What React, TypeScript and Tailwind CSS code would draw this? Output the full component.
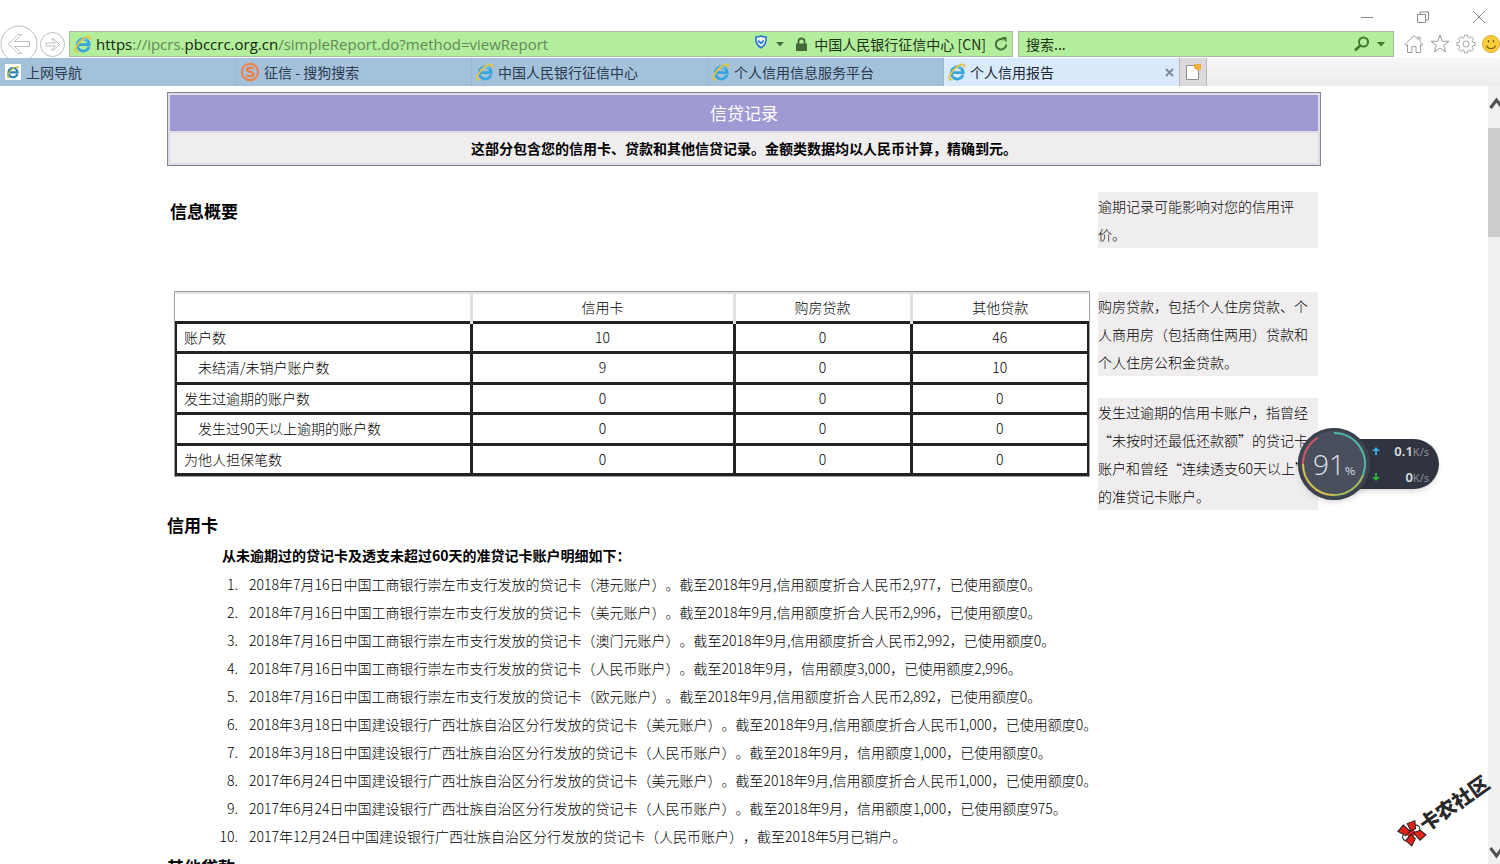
import type React from "react";

const creditCards = [
  "2018年7月16日中国工商银行崇左市支行发放的贷记卡（港元账户）。截至2018年9月,信用额度折合人民币2,977，已使用额度0。",
  "2018年7月16日中国工商银行崇左市支行发放的贷记卡（美元账户）。截至2018年9月,信用额度折合人民币2,996，已使用额度0。",
  "2018年7月16日中国工商银行崇左市支行发放的贷记卡（澳门元账户）。截至2018年9月,信用额度折合人民币2,992，已使用额度0。",
  "2018年7月16日中国工商银行崇左市支行发放的贷记卡（人民币账户）。截至2018年9月，信用额度3,000，已使用额度2,996。",
  "2018年7月16日中国工商银行崇左市支行发放的贷记卡（欧元账户）。截至2018年9月,信用额度折合人民币2,892，已使用额度0。",
  "2018年3月18日中国建设银行广西壮族自治区分行发放的贷记卡（美元账户）。截至2018年9月,信用额度折合人民币1,000，已使用额度0。",
  "2018年3月18日中国建设银行广西壮族自治区分行发放的贷记卡（人民币账户）。截至2018年9月，信用额度1,000，已使用额度0。",
  "2017年6月24日中国建设银行广西壮族自治区分行发放的贷记卡（美元账户）。截至2018年9月,信用额度折合人民币1,000，已使用额度0。",
  "2017年6月24日中国建设银行广西壮族自治区分行发放的贷记卡（人民币账户）。截至2018年9月，信用额度1,000，已使用额度975。",
  "2017年12月24日中国建设银行广西壮族自治区分行发放的贷记卡（人民币账户），截至2018年5月已销户。",
];

interface SummaryRow {
  label: string;
  indent?: boolean;
  values: number[];
}

const summary: SummaryRow[] = [
  { label: "账户数", values: [10, 0, 46] },
  { label: "未结清/未销户账户数", indent: true, values: [9, 0, 10] },
  { label: "发生过逾期的账户数", values: [0, 0, 0] },
  { label: "发生过90天以上逾期的账户数", indent: true, values: [0, 0, 0] },
  { label: "为他人担保笔数", values: [0, 0, 0] },
];

function IeIcon() {
  return (
    <svg width="18" height="18" viewBox="0 0 18 18" fill="none" className="shrink-0">
      <path
        d="M15 11.6A6 6 0 1 1 15.2 9.6H4.6"
        stroke="#3aa5dc"
        strokeWidth="2.8"
      />
      <path d="M4.2 8.2a6 6 0 0 1 9-3" stroke="#8bd4f3" strokeWidth="1" />
      <path
        d="M16.2 4.6C17 2.2 15.6.8 13 1.6 9 2.8 3.2 8.4 1.6 13c-1 2.8.2 4.4 2.8 3.4"
        stroke="#e2c443"
        strokeWidth="1.8"
      />
    </svg>
  );
}

function NavIcon() {
  return (
    <svg width="18" height="18" viewBox="0 0 18 18" fill="none" className="shrink-0">
      <path d="M1 1h16v16H1z" fill="#fff" />
      <path d="M13.4 11A4.6 4.6 0 1 1 13.6 9.4H6" stroke="#2b80b4" strokeWidth="2.2" />
      <path d="M14.4 5.4C15 2 9 4.600 6 8.200c-3 3.400-3.400 7.400 0 5.800" stroke="#b8bd36" strokeWidth="1.300" />
    </svg>
  );
}

function SogouIcon() {
  return (
    <svg width="20" height="20" viewBox="0 0 20 20" fill="none" className="shrink-0">
      <circle cx="10" cy="10" r="8.2" stroke="#ef7f45" strokeWidth="2" />
      <path
        d="M13.600 6.600C12 5.400 7 5.200 7 7.800c0 2.600 6.400 1.600 6.400 4.300 0 2.700-5.200 2.300-7 1"
        stroke="#ef7f45"
        strokeWidth="2.400"
      />
    </svg>
  );
}

interface TabProps {
  icon: React.ReactNode;
  title: string;
}

function Tab({ icon, title }: TabProps) {
  return (
    <button
      type="button"
      className="flex w-[236px] min-w-0 items-center gap-1 border-r border-[#9ab6d3] bg-[#a4c1dc] pl-1 text-left text-[#2b3a4c]"
    >
      {icon}
      <span className="truncate">{title}</span>
    </button>
  );
}

function TitleBar() {
  return (
    <div className="flex h-[30px] items-center justify-end gap-[42px] pr-[14px] pt-1 text-[#8a8a8a]">
      <button type="button" aria-label="最小化">
        <svg width="14" height="14" viewBox="0 0 14 14" stroke="currentColor">
          <path d="M1 7.500h12" />
        </svg>
      </button>
      <button type="button" aria-label="还原">
        <svg width="14" height="14" viewBox="0 0 14 14" fill="none" stroke="currentColor">
          <path d="M1.500 4.500h8v8h-8zM4 4.500v-2.500h8.500v8H9.500" />
        </svg>
      </button>
      <button type="button" aria-label="关闭">
        <svg width="14" height="14" viewBox="0 0 14 14" stroke="currentColor">
          <path d="M1 1l12 12M13 1L1 13" />
        </svg>
      </button>
    </div>
  );
}

function AddressBar() {
  return (
    <div className="flex h-7 items-center">
      <div className="flex w-[69px] shrink-0 items-center gap-[2px]">
        <button type="button" aria-label="后退" className="-my-2">
          <svg width="38" height="38" viewBox="0 0 38 38" fill="none" stroke="#bdbdbd">
            <circle cx="19" cy="19" r="18" />
            <path d="M8.500 19l9.500-9.500h3.500L14.500 16.500h15v5h-15l7 7H18z" strokeLinejoin="round" />
          </svg>
        </button>
        <button type="button" aria-label="前进">
          <svg width="25" height="25" viewBox="0 0 25 25" fill="none" stroke="#bdbdbd">
            <circle cx="12.500" cy="12.500" r="12" />
            <path d="M19.500 12.500l-5.500-5.500h-2.500l4 4h-9.500v3h9.500l-4 4H14z" strokeLinejoin="round" />
          </svg>
        </button>
      </div>
      <div className="mr-[5px] flex h-[26px] min-w-0 flex-1 items-center border border-[#a9b8a3] bg-[#b3ee9c] px-1">
        <IeIcon />
        <div
          role="textbox"
          aria-label="地址"
          className="ml-1 min-w-0 flex-1 truncate font-['Open_Sans','Noto_Sans_CJK_SC',sans-serif] text-[15px] leading-5 text-[#64885a]"
        >
          <span className="text-[#14240f]">https</span>://ipcrs.
          <span className="text-[#14240f]">pbccrc.org.cn</span>
          /simpleReport.do?method=viewReport
        </div>
        <svg width="14" height="14" viewBox="0 0 14 14" fill="none" className="mb-1 shrink-0">
          <path
            d="M7 1c2 .8 3.600 1 5.200 1 .3 5-1 8.500-5.200 10.800C2.800 10.500 1.500 7 1.800 2 3.400 2 5 1.800 7 1z"
            fill="#e9f4ff"
            stroke="#2f74d8"
            strokeWidth="1.600"
          />
          <path d="M4.200 5.600L7 8.400l2.800-2.800" stroke="#2f74d8" strokeWidth="1.600" />
        </svg>
        <svg width="8" height="5" viewBox="0 0 8 5" className="ml-2 shrink-0">
          <path d="M0 0h8L4 4.500z" fill="#46713a" />
        </svg>
        <svg width="13" height="15" viewBox="0 0 13 15" fill="none" className="ml-[11px] shrink-0">
          <path d="M3.500 7V4.500a3 3 0 0 1 6 0V7" stroke="#46663c" strokeWidth="1.800" />
          <path d="M1 6.500h11V14H1z" fill="#46663c" />
        </svg>
        <span className="ml-[6px] shrink-0 text-[14px] text-[#1d3316]">中国人民银行征信中心 [CN]</span>
        <button type="button" aria-label="刷新" className="ml-2 shrink-0">
          <svg width="14" height="14" viewBox="0 0 14 14" fill="none">
            <path d="M12.200 7.500A5.200 5.200 0 1 1 9 2.500" stroke="#46713a" strokeWidth="2" />
            <path d="M7.500 0h5v5.500z" fill="#46713a" />
          </svg>
        </button>
      </div>
      <div className="flex h-[26px] w-[376px] shrink-0 items-center border border-[#a9b8a3] bg-[#b3ee9c] pl-[7px] pr-2">
        <input
          type="text"
          aria-label="搜索"
          placeholder="搜索..."
          className="min-w-0 flex-1 bg-transparent text-[14px] outline-none placeholder:text-[#1d3316]"
        />
        <button type="button" aria-label="开始搜索" className="flex items-center gap-[7px]">
          <svg width="16" height="16" viewBox="0 0 16 16" fill="none" stroke="#3d7a2c">
            <circle cx="9.500" cy="6" r="4.500" strokeWidth="2" />
            <path d="M6.200 9.500L1 14.500" strokeWidth="2.600" />
          </svg>
          <svg width="8" height="5" viewBox="0 0 8 5">
            <path d="M0 0h8L4 4.500z" fill="#3d7a2c" />
          </svg>
        </button>
      </div>
      <div className="flex w-[106px] shrink-0 items-center justify-end gap-[6px]">
        <button type="button" aria-label="主页">
          <svg width="20" height="20" viewBox="0 0 20 20" fill="none" stroke="#9c9c9c">
            <path
              d="M1 10.500L10 1.500l4 4V3h2v4.500l3 3-1.200 1.200-1.300-1.200V18.500h-4.500v-6H8v6H3.500V10.500L2.200 11.700z"
              strokeLinejoin="round"
            />
          </svg>
        </button>
        <button type="button" aria-label="收藏夹">
          <svg width="20" height="20" viewBox="0 0 20 20" fill="none" stroke="#9c9c9c">
            <path
              d="M10 1l2.300 6.300h6.700l-5.300 4.100 2 6.600-5.700-4-5.700 4 2-6.600L1 7.300h6.700z"
              strokeLinejoin="round"
            />
          </svg>
        </button>
        <button type="button" aria-label="工具">
          <svg width="20" height="20" viewBox="0 0 24 26" fill="none" stroke="#9c9c9c" strokeWidth="1.200">
            <path
              d="M10 1.500h4l.5 3 2 .8 2.500-1.800 2.800 2.800-1.800 2.500.8 2 3 .4v3.600l-3 .5-.8 2 1.800 2.500-2.800 2.800-2.500-1.800-2 .8-.5 2.900h-4l-.5-2.900-2-.8L5 22.600l-2.800-2.800L4 17.300l-.8-2-3-.5v-3.600l3-.4.8-2L2.200 6.300 5 3.500l2.500 1.800 2-.8z"
              strokeLinejoin="round"
            />
            <circle cx="12" cy="13" r="4" />
          </svg>
        </button>
        <button type="button" aria-label="反馈">
          <svg width="18" height="18" viewBox="0 0 18 18" fill="none">
            <circle cx="9" cy="9" r="8.500" fill="#fbcf3c" stroke="#dba92a" />
            <path d="M4.500 10.500c1.200 4 7.800 4 9 0" stroke="#7c5a17" strokeWidth="1.200" />
            <path d="M6.500 5v2.500M11.500 5v2.500" stroke="#7c5a17" strokeWidth="1.400" />
          </svg>
        </button>
      </div>
    </div>
  );
}

function TabStrip() {
  return (
    <div className="relative flex h-7 bg-linear-to-b from-[#f7f7f7] to-[#ececec] text-[14px]">
      <Tab icon={<NavIcon />} title="上网导航" />
      <Tab icon={<SogouIcon />} title="征信 - 搜狗搜索" />
      <Tab icon={<IeIcon />} title="中国人民银行征信中心" />
      <Tab icon={<IeIcon />} title="个人信用信息服务平台" />
      <div className="flex w-[235px] min-w-0 items-center gap-1 bg-[#d8eafb] pl-1 pr-[5px] text-[#1c2733]">
        <IeIcon />
        <span className="flex-1 truncate">个人信用报告</span>
        <button type="button" aria-label="关闭标签页">
          <svg width="9" height="9" viewBox="0 0 9 9" stroke="#7b8c9e" strokeWidth="2">
            <path d="M1 1l7 7M8 1L1 8" />
          </svg>
        </button>
      </div>
      <button
        type="button"
        aria-label="新建标签页"
        className="flex w-7 shrink-0 items-center justify-center border-x border-[#b9b7b9] bg-[#dbd9db]"
      >
        <svg width="16" height="18" viewBox="0 0 16 18">
          <path d="M1.500 2.500h12v14h-12z" fill="#fff" stroke="#8e8e8e" />
          <path d="M9 1h7v5l-3 2-4-3z" fill="#f0ad3c" />
        </svg>
      </button>
    </div>
  );
}

function Note({ children }: { children: React.ReactNode }) {
  return <p className="bg-[#f0edee] pr-[5px] leading-7">{children}</p>;
}

function SummaryTable() {
  return (
    <div className="border border-[#a0a0a0]">
      <table className="h-[184px] w-full table-fixed border-collapse text-center">
        <colgroup>
          <col />
          <col className="w-[263px]" />
          <col className="w-[177px]" />
          <col className="w-[177px]" />
        </colgroup>
        <thead>
          <tr>
            {["", "信用卡", "购房贷款", "其他贷款"].map((head) => (
              <th
                key={head}
                scope="col"
                className="h-[29px] border-x-[3px] border-t-2 border-[#e2e2e2] font-light first:border-l-0 last:border-r-0"
              >
                {head}
              </th>
            ))}
          </tr>
        </thead>
        <tbody>
          {summary.map((row) => (
            <tr key={row.label}>
              <th
                scope="row"
                className={`border-[3px] border-l-2 border-[#222] text-left font-light ${
                  row.indent ? "pl-[21px]" : "pl-[7px]"
                }`}
              >
                {row.label}
              </th>
              {row.values.map((value, i) => (
                <td key={i} className="border-[3px] border-[#222] last:border-r-2">
                  {value}
                </td>
              ))}
            </tr>
          ))}
        </tbody>
      </table>
    </div>
  );
}

function Report() {
  return (
    <main
      lang="zh-CN"
      className="mx-auto w-full max-w-[1154px] pt-[6px] text-[14px] font-light text-black [text-spacing-trim:space-all]"
    >
      <header className="border border-[#858585] bg-[#dedbe8] p-[2px] text-center font-bold">
        <h1 className="bg-[#9f99d4] text-[17px] leading-9 font-normal text-white">信贷记录</h1>
        <p className="mt-[2px] bg-[#f0edee] leading-[30px]">
          这部分包含您的信用卡、贷款和其他信贷记录。金额类数据均以人民币计算，精确到元。
        </p>
      </header>

      <section className="mt-[26px] grid grid-cols-[1fr_220px] gap-x-2 pl-[7px] pr-[3px]">
        <h2 className="-ml-1 pt-1 text-[17px] leading-[30px] font-bold">信息概要</h2>
        <Note>逾期记录可能影响对您的信用评价。</Note>
        <div className="mt-[43px]">
          <SummaryTable />
        </div>
        <div className="mt-11 flex flex-col gap-[22px]">
          <Note>购房贷款，包括个人住房贷款、个人商用房（包括商住两用）贷款和个人住房公积金贷款。</Note>
          <Note>
            发生过逾期的信用卡账户，指曾经“未按时还最低还款额”的贷记卡账户和曾经“连续透支60天以上”的准贷记卡账户。
          </Note>
        </div>
      </section>

      <section>
        <h2 className="text-[17px] leading-[30px] font-bold">信用卡</h2>
        <h3 className="pl-[55px] leading-[30px] font-bold">
          从未逾期过的贷记卡及透支未超过60天的准贷记卡账户明细如下：
        </h3>
        <ol className="list-decimal pl-[74px] leading-7">
          {creditCards.map((card) => (
            <li key={card} className="pl-2">
              {card}
            </li>
          ))}
        </ol>
      </section>

      <h2 className="mt-[2px] text-[17px] leading-[30px] font-bold">其他贷款</h2>
    </main>
  );
}

function Scrollbar() {
  return (
    <div className="flex w-[12px] shrink-0 flex-col overflow-hidden bg-[#f0f0f0]">
      <svg width="17" height="42" viewBox="0 0 17 42" fill="none" className="shrink-0">
        <path d="M2.500 22L8.500 14l6 8" stroke="#505050" strokeWidth="3" />
      </svg>
      <div className="h-[109px] shrink-0 bg-[#cdcdcd]" />
      <svg width="17" height="20" viewBox="0 0 17 20" fill="none" className="mt-auto shrink-0">
        <path d="M2.500 4l6 8 6-8" stroke="#505050" strokeWidth="3" />
      </svg>
    </div>
  );
}

function SpeedWidget() {
  return (
    <div className="absolute top-[428px] right-[61px] flex items-center">
      <div className="relative z-10 -mr-5 flex size-[72px] items-center justify-center rounded-full bg-[#4a4f5d] text-[#dfe3ea] shadow-md">
        <svg width="72" height="72" viewBox="0 0 72 72" fill="none" className="absolute inset-0">
          <circle cx="36" cy="36" r="34.500" stroke="#3c414d" strokeWidth="3" />
          <path d="M36 5a31 31 0 0 1 29 42" stroke="#4fb9a8" strokeWidth="2" />
          <path d="M65 47A31 31 0 0 1 36 67" stroke="#a9c061" strokeWidth="2" />
          <path d="M36 67A31 31 0 0 1 5 36" stroke="#d6c150" strokeWidth="2" />
          <path d="M5 36a31 31 0 0 1 15-26.500" stroke="#d0566a" strokeWidth="2" />
        </svg>
        <span className="font-['Open_Sans',sans-serif] text-[28px] leading-8 font-light">91</span>
        <span className="mt-3 text-[11px] leading-4">%</span>
      </div>
      <div className="flex h-[50px] w-[89px] flex-col justify-center gap-[5px] rounded-r-full bg-[#2f3440] pr-[10px] pl-[22px] font-['Noto_Sans',sans-serif] text-[13px] leading-5 font-semibold text-[#dde0e5] shadow-md">
        <div className="flex items-center justify-between">
          <svg width="8" height="8" viewBox="0 0 8 8">
            <path d="M4 0l4 4H5v4H3V4H0z" fill="#38a3e0" />
          </svg>
          <span>
            0.1<small className="text-[11px] font-normal text-[#8b909b]">K/s</small>
          </span>
        </div>
        <div className="flex items-center justify-between">
          <svg width="8" height="8" viewBox="0 0 8 8">
            <path d="M4 8l4-4H5V0H3v4H0z" fill="#2fae3c" />
          </svg>
          <span>
            0<small className="text-[11px] font-normal text-[#8b909b]">K/s</small>
          </span>
        </div>
      </div>
    </div>
  );
}

function Watermark() {
  return (
    <div className="absolute right-1 bottom-[42px] flex -rotate-[35deg] items-center text-[20px] leading-6 font-black text-[#2a2a2a]">
      <svg width="24" height="24" viewBox="0 0 24 24" stroke="#222" strokeWidth="1">
        <circle cx="18.500" cy="11.500" r="3.500" fill="#fff" />
        <circle cx="5.500" cy="12.500" r="3.500" fill="#fff" />
        <path d="M8 8l8 1-1 7-8-1z" fill="#e2231a" stroke="none" />
        <path d="M2 3l8-2 2 9-6 1zM14 2l8 2-4 7-5-1zM3 15l8-2 1 6-7 4zM14 13l7 2 2 7-8 1z" fill="#e2231a" />
      </svg>
      卡农社区
    </div>
  );
}

export default function App() {
  return (
    <div className="relative flex h-screen flex-col overflow-hidden bg-white font-['Noto_Sans_CJK_SC',sans-serif]">
      <TitleBar />
      <AddressBar />
      <TabStrip />
      <div className="flex min-h-0 flex-1">
        <div className="min-w-0 flex-1 overflow-hidden">
          <Report />
        </div>
        <Scrollbar />
      </div>
      <SpeedWidget />
      <Watermark />
    </div>
  );
}
